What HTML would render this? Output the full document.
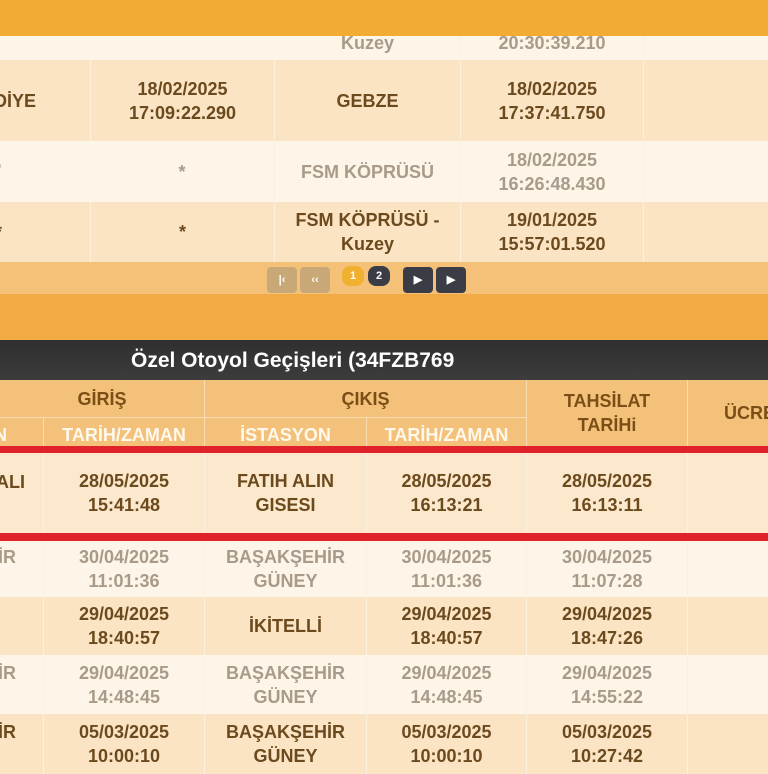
<!DOCTYPE html>
<html><head><meta charset="utf-8"><style>
*{margin:0;padding:0;box-sizing:border-box}
body{width:768px;height:768px;overflow:hidden;position:relative;background:#fdf5e8;font-family:"Liberation Sans Narrow","Liberation Sans",sans-serif;font-weight:bold;font-size:18px;line-height:24px}
.r{position:absolute;left:0;width:768px}
.c{position:absolute;display:flex;align-items:center;justify-content:center;text-align:center;height:100%;top:0}
.e{position:absolute;top:0;height:100%;display:flex;align-items:center}
.L{background:#fdf5e8;color:#a89b89}
.D{background:#fbe4c3;color:#6b4a1e}
.D .c{border-right:1px solid #fdf0dc}
.L .c{border-right:1px solid #fbefe0}
.h .c{border-right:1px solid #f9dcb0}
.pb{position:absolute;top:6px;height:24px;border-radius:4px;font-size:11px;color:#fff;display:flex;align-items:center;justify-content:center}
</style></head><body>
<div class="r" style="top:0;height:36px;background:#f2ac33"></div>
<div class="r L" style="top:36px;height:24px">
<div class="c" style="left:275px;width:186px;line-height:14px;align-items:flex-start">Kuzey</div>
<div class="c" style="left:461px;width:183px;line-height:14px;align-items:flex-start">20:30:39.210</div></div>
<div class="r D" style="top:60px;height:81px">
<div class="e" style="left:-6px">DİYE</div>
<div class="c" style="left:90px;width:185px;border-left:1px solid #fdf0dc">18/02/2025<br>17:09:22.290</div>
<div class="c" style="left:275px;width:186px">GEBZE</div>
<div class="c" style="left:461px;width:183px">18/02/2025<br>17:37:41.750</div>
<div class="c" style="left:644px;width:200px"></div></div>
<div class="r L" style="top:141px;height:61px">
<div class="e" style="left:-4px">/</div>
<div class="c" style="left:90px;width:185px">*</div>
<div class="c" style="left:275px;width:186px">FSM KÖPRÜSÜ</div>
<div class="c" style="left:461px;width:183px">18/02/2025<br>16:26:48.430</div></div>
<div class="r D" style="top:202px;height:60px">
<div class="e" style="left:-5px">*</div>
<div class="c" style="left:90px;width:185px;border-left:1px solid #fdf0dc">*</div>
<div class="c" style="left:275px;width:186px">FSM KÖPRÜSÜ -<br>Kuzey</div>
<div class="c" style="left:461px;width:183px">19/01/2025<br>15:57:01.520</div>
<div class="c" style="left:644px;width:200px"></div></div>
<div class="r" style="top:262px;height:32px;background:#f5c179">
<div class="pb" style="left:267px;width:30px;top:5px;height:26px;background:#c9a877">|‹</div>
<div class="pb" style="left:300px;width:30px;top:5px;height:26px;background:#c9a877">‹‹</div>
<div class="pb" style="left:342px;width:22px;top:4px;height:20px;background:#f0b030;border-radius:8px">1</div>
<div class="pb" style="left:368px;width:22px;top:4px;height:20px;background:#3a3d45;border-radius:8px">2</div>
<div class="pb" style="left:403px;width:30px;top:5px;height:26px;background:#3a3d45">▶</div>
<div class="pb" style="left:436px;width:30px;top:5px;height:26px;background:#3a3d45">▶</div></div>
<div class="r" style="top:294px;height:46px;background:#f2ab44"></div>
<div class="r" style="top:340px;height:40px;background:linear-gradient(#2f2f2f,#3c3c3c);color:#fff;font-size:21px">
<div style="position:absolute;left:131px;top:9px">Özel Otoyol Geçişleri (34FZB769</div></div>
<div class="r h" style="top:380px;height:66px;background:#f4c17a;color:#7a4f16">
<div class="c" style="left:0;width:205px;height:38px;border-bottom:1px solid #f9dcb0">GİRİŞ</div>
<div class="c" style="left:205px;width:322px;height:38px;border-bottom:1px solid #f9dcb0">ÇIKIŞ</div>
<div class="c" style="left:527px;width:161px">TAHSİLAT<br>TARİHi</div>
<div class="c" style="left:688px;width:120px;justify-content:flex-start;padding-left:36px">ÜCRE</div>
<div class="c" style="top:38px;height:28px;left:-40px;width:84px;color:#fff8ec;justify-content:flex-end;padding-top:6px"></div>
<div class="e" style="top:44px;height:22px;left:-6px;color:#fff8ec">N</div>
<div class="c" style="top:38px;height:28px;left:44px;width:161px;color:#fff8ec;padding-top:6px">TARİH/ZAMAN</div>
<div class="c" style="top:38px;height:28px;left:205px;width:162px;color:#fff8ec;padding-top:6px">İSTASYON</div>
<div class="c" style="top:38px;height:28px;left:367px;width:160px;color:#fff8ec;padding-top:6px">TARİH/ZAMAN</div></div>
<div class="r" style="top:446px;height:7px;background:#e0222a"></div>
<div class="r D" style="top:453px;height:80px;background:#fce8cc">
<div class="c" style="left:-40px;width:84px"></div>
<div class="e" style="left:-4px;padding-bottom:22px">ALI</div>
<div class="c" style="left:44px;width:161px">28/05/2025<br>15:41:48</div>
<div class="c" style="left:205px;width:162px">FATIH ALIN<br>GISESI</div>
<div class="c" style="left:367px;width:160px">28/05/2025<br>16:13:21</div>
<div class="c" style="left:527px;width:161px">28/05/2025<br>16:13:11</div>
<div class="c" style="left:688px;width:120px"></div></div>
<div class="r" style="top:533px;height:8px;background:#e0222a"></div>
<div class="r L" style="top:541px;height:56px">
<div class="c" style="left:-40px;width:84px"></div>
<div class="e" style="left:-2px;padding-bottom:24px">İR</div>
<div class="c" style="left:44px;width:161px">30/04/2025<br>11:01:36</div>
<div class="c" style="left:205px;width:162px">BAŞAKŞEHİR<br>GÜNEY</div>
<div class="c" style="left:367px;width:160px">30/04/2025<br>11:01:36</div>
<div class="c" style="left:527px;width:161px">30/04/2025<br>11:07:28</div>
<div class="c" style="left:688px;width:120px"></div></div>
<div class="r D" style="top:597px;height:58px">
<div class="c" style="left:-40px;width:84px"></div>
<div class="c" style="left:44px;width:161px">29/04/2025<br>18:40:57</div>
<div class="c" style="left:205px;width:162px">İKİTELLİ</div>
<div class="c" style="left:367px;width:160px">29/04/2025<br>18:40:57</div>
<div class="c" style="left:527px;width:161px">29/04/2025<br>18:47:26</div>
<div class="c" style="left:688px;width:120px"></div></div>
<div class="r L" style="top:655px;height:59px">
<div class="c" style="left:-40px;width:84px"></div>
<div class="e" style="left:-2px;padding-bottom:24px">İR</div>
<div class="c" style="left:44px;width:161px">29/04/2025<br>14:48:45</div>
<div class="c" style="left:205px;width:162px">BAŞAKŞEHİR<br>GÜNEY</div>
<div class="c" style="left:367px;width:160px">29/04/2025<br>14:48:45</div>
<div class="c" style="left:527px;width:161px">29/04/2025<br>14:55:22</div>
<div class="c" style="left:688px;width:120px"></div></div>
<div class="r D" style="top:714px;height:60px">
<div class="c" style="left:-40px;width:84px"></div>
<div class="e" style="left:-2px;padding-bottom:24px">İR</div>
<div class="c" style="left:44px;width:161px">05/03/2025<br>10:00:10</div>
<div class="c" style="left:205px;width:162px">BAŞAKŞEHİR<br>GÜNEY</div>
<div class="c" style="left:367px;width:160px">05/03/2025<br>10:00:10</div>
<div class="c" style="left:527px;width:161px">05/03/2025<br>10:27:42</div>
<div class="c" style="left:688px;width:120px"></div></div>
</body></html>
